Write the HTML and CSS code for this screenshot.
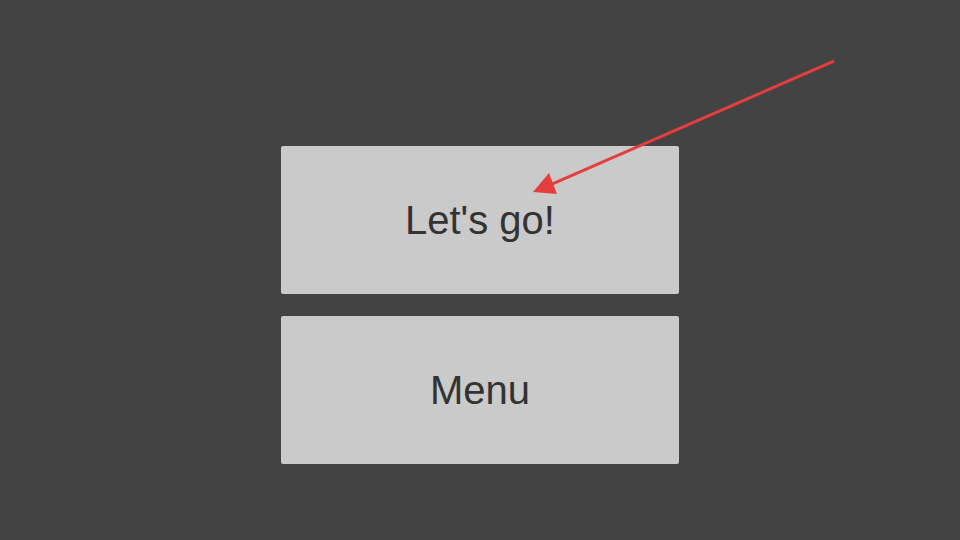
FILE: index.html
```html
<!DOCTYPE html>
<html>
<head>
<meta charset="utf-8">
<link rel="stylesheet" href="styles.css">
</head>
<body>
<div class="stage">
  <div class="buttons">
    <button class="btn">Let's go!</button>
    <button class="btn">Menu</button>
  </div>
  <svg class="arrow" width="960" height="540" viewBox="0 0 960 540">
    <line x1="834" y1="61" x2="545" y2="187" stroke="#e53e3e" stroke-width="3" stroke-linecap="butt"/>
    <polygon points="533,192 549,173 557,194" fill="#e53e3e"/>
  </svg>
</div>
</body>
</html>
```
FILE: styles.css
```css
html, body {
  margin: 0;
  padding: 0;
  background: #434343;
}
.stage {
  position: relative;
  width: 960px;
  height: 540px;
  overflow: hidden;
}
.buttons {
  display: flex;
  flex-direction: column;
  align-items: center;
  gap: 22px;
  padding-top: 146px;
}
.btn {
  width: 398px;
  height: 148px;
  background: #cacaca;
  border: none;
  border-radius: 2px;
  color: #333333;
  font-family: "Liberation Sans", Arial, sans-serif;
  font-size: 40px;
  padding: 0;
  margin: 0;
}
.arrow {
  position: absolute;
  left: 0;
  top: 0;
  pointer-events: none;
}
```
